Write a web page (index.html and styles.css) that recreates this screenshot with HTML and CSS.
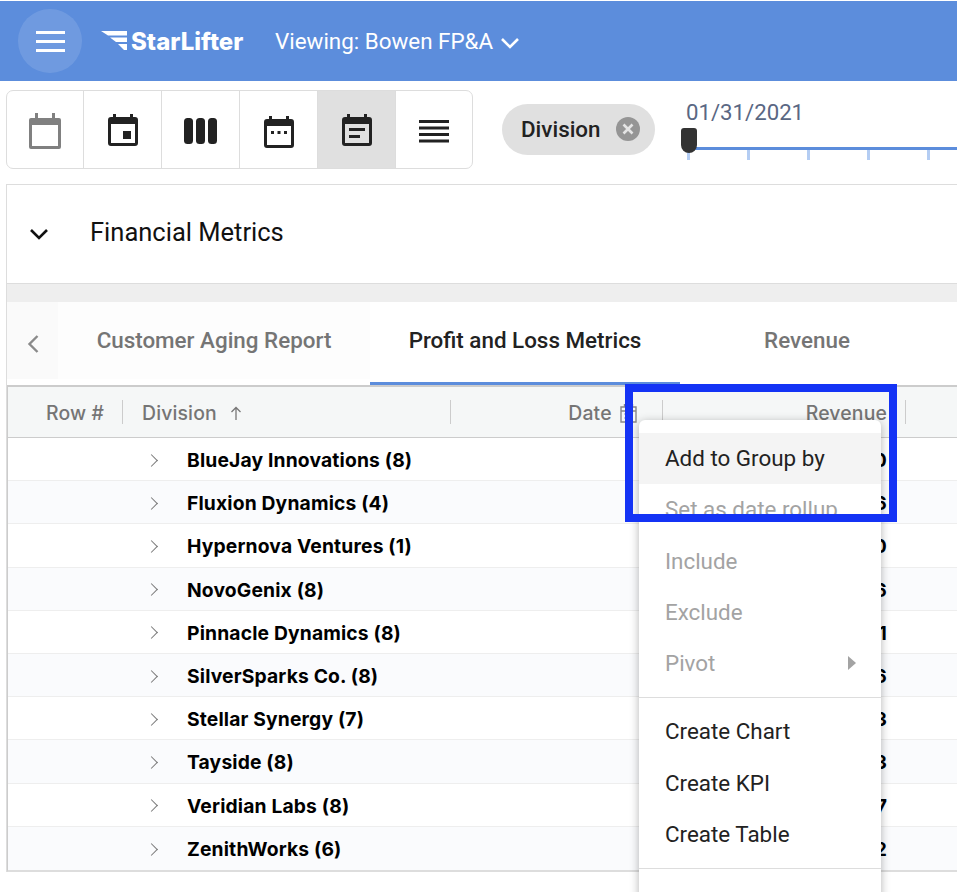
FILE: index.html
```html
<!DOCTYPE html>
<html lang="en">
<head>
    <meta charset="UTF-8">
    <meta name="viewport" content="width=device-width, initial-scale=1.0">
    <title>StarLifter - Financial Metrics</title>
    <link rel="stylesheet" href="styles.css">
</head>
<body>
    <header class="topbar">
        <button class="menu-btn"><span></span><span></span><span></span></button>
        <div class="logo">
            <svg class="logo-wing" width="30" height="20" viewBox="0 0 30 20">
                <polygon points="0,0 26,0 26,4.5 7,4.5" fill="#fff"/>
                <polygon points="9,6.5 26,6.5 26,11 15,11" fill="#fff"/>
                <polygon points="17,13 26,13 26,19 23,19" fill="#fff"/>
            </svg>
            <span class="logo-text">StarLifter</span>
        </div>
        <div class="viewing">Viewing: Bowen FP&amp;A</div>
        <svg class="viewing-caret" width="20" height="12" viewBox="0 0 20 12">
            <path d="M2 2 L10 10 L18 2" fill="none" stroke="#fff" stroke-width="2.6"/>
        </svg>
    </header>

    <section class="controls">
        <div class="view-switch">
            <div class="view-btn">
                <svg width="34" height="38" viewBox="0 0 34 38">
                    <path d="M7 1h3v5h14V1h3v5h4a2 2 0 0 1 2 2v27a2 2 0 0 1-2 2H3a2 2 0 0 1-2-2V8a2 2 0 0 1 2-2h4z M4 13v21h26V13z" fill="#808080" fill-rule="evenodd"/>
                </svg>
            </div>
            <div class="view-btn">
                <svg width="30" height="34" viewBox="0 0 30 34">
                    <path d="M5 1h3v3h14V1h3v3h2a3 3 0 0 1 3 3v23a3 3 0 0 1-3 3H3a3 3 0 0 1-3-3V7a3 3 0 0 1 3-3h2z M3 11v19h24V11z" fill="#222" fill-rule="evenodd"/>
                    <rect x="15" y="18" width="8" height="8" fill="#222"/>
                </svg>
            </div>
            <div class="view-btn">
                <svg width="34" height="26" viewBox="0 0 34 26">
                    <rect x="0" y="0" width="9" height="26" rx="3.5" fill="#222"/>
                    <rect x="12" y="0" width="9" height="26" rx="3.5" fill="#222"/>
                    <rect x="24" y="0" width="9" height="26" rx="3.5" fill="#222"/>
                </svg>
            </div>
            <div class="view-btn">
                <svg width="30" height="34" viewBox="0 0 30 34">
                    <path d="M5 1h3v3h14V1h3v3h2a3 3 0 0 1 3 3v23a3 3 0 0 1-3 3H3a3 3 0 0 1-3-3V7a3 3 0 0 1 3-3h2z M3 11v19h24V11z" fill="#222" fill-rule="evenodd"/>
                    <rect x="7" y="16" width="3" height="3" fill="#222"/>
                    <rect x="13.5" y="16" width="3" height="3" fill="#222"/>
                    <rect x="20" y="16" width="3" height="3" fill="#222"/>
                </svg>
            </div>
            <div class="view-btn is-active">
                <svg width="30" height="34" viewBox="0 0 30 34">
                    <path d="M5 1h3v3h14V1h3v3h2a3 3 0 0 1 3 3v23a3 3 0 0 1-3 3H3a3 3 0 0 1-3-3V7a3 3 0 0 1 3-3h2z M3 11v19h24V11z" fill="#222" fill-rule="evenodd"/>
                    <rect x="7" y="15" width="16" height="3" fill="#222"/>
                    <rect x="7" y="22" width="11" height="3" fill="#222"/>
                </svg>
            </div>
            <div class="view-btn">
                <svg width="30" height="24" viewBox="0 0 30 24">
                    <rect x="0" y="0" width="30" height="3" fill="#222"/>
                    <rect x="0" y="6.5" width="30" height="3" fill="#222"/>
                    <rect x="0" y="13" width="30" height="3" fill="#222"/>
                    <rect x="0" y="19.5" width="30" height="3" fill="#222"/>
                </svg>
            </div>
        </div>

        <div class="chip">
            <span>Division</span>
            <svg width="24" height="24" viewBox="0 0 24 24">
                <circle cx="12" cy="12" r="12" fill="#959595"/>
                <path d="M7.5 7.5 L16.5 16.5 M16.5 7.5 L7.5 16.5" stroke="#e4e4e4" stroke-width="2.6"/>
            </svg>
        </div>

        <div class="slider">
            <div class="slider-date">01/31/2021</div>
            <div class="slider-track">
                <span class="tick"></span><span class="tick"></span><span class="tick"></span><span class="tick"></span><span class="tick"></span>
                <span class="thumb"></span>
            </div>
        </div>
    </section>

    <section class="panel">
        <div class="panel-head">
            <svg width="20" height="12" viewBox="0 0 20 12">
                <path d="M2 2 L10 10 L18 2" fill="none" stroke="#111" stroke-width="2.6"/>
            </svg>
            <h2>Financial Metrics</h2>
        </div>
        <div class="band"></div>

        <div class="tabs">
            <div class="tab-back">
                <svg width="12" height="20" viewBox="0 0 12 20">
                    <path d="M10.5 2 L2.5 10 L10.5 18" fill="none" stroke="#8a8a8a" stroke-width="2.4"/>
                </svg>
            </div>
            <div class="tab tab-first">Customer Aging Report</div>
            <div class="tab is-active">Profit and Loss Metrics</div>
            <div class="tab tab-last">Revenue</div>
        </div>

        <div class="grid">
            <div class="grid-head">
                <div class="col-row">Row #</div>
                <div class="col-division">
                    Division
                    <svg width="12" height="14" viewBox="0 0 12 14">
                        <path d="M6 14 V2 M1.5 6 L6 1.5 L10.5 6" fill="none" stroke="#777" stroke-width="1.3"/>
                    </svg>
                </div>
                <div class="col-date">
                    Date
                    <svg width="17" height="20" viewBox="0 0 17 20">
                        <path d="M1 4h15v15H1z M1 8h15 M4.5 1v3 M12.5 1v3 M4.5 11h8 M4.5 15h8" fill="none" stroke="#888" stroke-width="1.4"/>
                    </svg>
                </div>
                <div class="col-revenue">Revenue</div>
            </div>

            <div class="grid-row"><span class="row-caret"></span><b>BlueJay Innovations (8)</b><span class="row-value">0</span></div>
            <div class="grid-row"><span class="row-caret"></span><b>Fluxion Dynamics (4)</b><span class="row-value">6</span></div>
            <div class="grid-row"><span class="row-caret"></span><b>Hypernova Ventures (1)</b><span class="row-value">0</span></div>
            <div class="grid-row"><span class="row-caret"></span><b>NovoGenix (8)</b><span class="row-value">6</span></div>
            <div class="grid-row"><span class="row-caret"></span><b>Pinnacle Dynamics (8)</b><span class="row-value">1</span></div>
            <div class="grid-row"><span class="row-caret"></span><b>SilverSparks Co. (8)</b><span class="row-value">6</span></div>
            <div class="grid-row"><span class="row-caret"></span><b>Stellar Synergy (7)</b><span class="row-value">3</span></div>
            <div class="grid-row"><span class="row-caret"></span><b>Tayside (8)</b><span class="row-value">3</span></div>
            <div class="grid-row"><span class="row-caret"></span><b>Veridian Labs (8)</b><span class="row-value">7</span></div>
            <div class="grid-row"><span class="row-caret"></span><b>ZenithWorks (6)</b><span class="row-value">2</span></div>
        </div>
    </section>

    <div class="context-menu">
        <div class="menu-item is-hover">Add to Group by</div>
        <div class="menu-item is-disabled">Set as date rollup</div>
        <div class="menu-item is-disabled">Include</div>
        <div class="menu-item is-disabled">Exclude</div>
        <div class="menu-item is-disabled">Pivot<span class="submenu-arrow"></span></div>
        <hr>
        <div class="menu-item">Create Chart</div>
        <div class="menu-item">Create KPI</div>
        <div class="menu-item">Create Table</div>
        <hr>
    </div>
    <div class="highlight-box"></div>
</body>
</html>
```

FILE: styles.css
```css
html, body {
    height: 892px;
    overflow: hidden;
}
body {
    margin: 0;
    position: relative;
    font-family: Roboto, "Liberation Sans", sans-serif;
    background-color: #fff;
    color: #222;
}

/* top bar */
.topbar {
    height: 80px;
    border-top: 1px solid #fff;
    background-color: #5c8ddc;
    display: flex;
    align-items: center;
    color: #fff;
}
.menu-btn {
    width: 64px;
    height: 64px;
    margin-left: 18px;
    padding: 0;
    border: none;
    border-radius: 50%;
    background-color: rgba(255, 255, 255, 0.12);
    display: flex;
    flex-direction: column;
    align-items: center;
    justify-content: center;
    gap: 6px;
}
.menu-btn span {
    display: block;
    width: 29px;
    height: 3px;
    background-color: #fff;
}
.logo {
    display: flex;
    align-items: center;
    margin-left: 19px;
    width: 174px;
}
.logo-text {
    font-family: Inter, sans-serif;
    font-weight: 800;
    font-size: 24px;
}
.viewing {
    font-size: 22.4px;
}
.viewing-caret {
    margin-left: 7px;
    margin-top: 4px;
}

/* controls row */
.controls {
    height: 103px;
    padding-left: 6px;
    display: flex;
    align-items: flex-start;
}
.view-switch {
    display: flex;
    height: 77px;
    margin-top: 9px;
    border: 1px solid #ddd;
    border-radius: 7px;
    overflow: hidden;
}
.view-btn {
    width: 78px;
    box-sizing: border-box;
    display: flex;
    align-items: center;
    justify-content: center;
    border-right: 1px solid #ddd;
}
.view-btn:first-child {
    width: 77px;
}
.view-btn:last-child {
    width: 76px;
    border-right: none;
}
.view-btn:nth-child(1) svg,
.view-btn:nth-child(3) svg {
    margin-top: 3px;
}
.view-btn:nth-child(4) svg,
.view-btn:nth-child(6) svg {
    margin-top: 4px;
}
.view-btn.is-active {
    background-color: #e0e0e0;
}
.chip {
    margin: 23px 0 0 29px;
    height: 51px;
    width: 153px;
    box-sizing: border-box;
    padding: 0 15px 2px 19px;
    border-radius: 26px;
    background-color: #e0e0e0;
    display: flex;
    align-items: center;
    justify-content: space-between;
    font-size: 22.4px;
    font-weight: 500;
}
.slider {
    flex: 1;
    margin: 18px 0 0 31px;
}
.slider-date {
    font-size: 22.2px;
    line-height: 26px;
    color: #5a6783;
}
.slider-track {
    position: relative;
    margin-top: 22px;
    margin-left: 1px;
    height: 3px;
    background-color: #5c8ddc;
    display: flex;
    gap: 57px;
}
.tick {
    width: 3px;
    height: 10px;
    margin-top: 3px;
    background-color: #b4cdf3;
}
.thumb {
    position: absolute;
    left: -6px;
    top: -19px;
    width: 16px;
    height: 25px;
    border-radius: 3px 3px 8px 8px;
    background-color: #333;
}

/* panel */
.panel {
    margin-left: 6px;
    border-left: 1px solid #ddd;
    border-top: 1px solid #ddd;
}
.panel-head {
    height: 99px;
    box-sizing: border-box;
    border-bottom: 1px solid #ddd;
    display: flex;
    align-items: center;
    padding-left: 22px;
}
.panel-head h2 {
    margin: 0 0 4px 41px;
    font-size: 25.5px;
    font-weight: 400;
    color: #111;
}
.band {
    height: 18px;
    background-color: #eee;
}

/* tabs */
.tabs {
    height: 84px;
    display: flex;
    font-size: 22.4px;
    font-weight: 500;
}
.tab-back {
    width: 51px;
    height: 77px;
    box-sizing: border-box;
    padding-top: 6px;
    background-color: #fafafa;
    display: flex;
    align-items: center;
    justify-content: center;
}
.tab {
    display: flex;
    align-items: center;
    justify-content: center;
    box-sizing: border-box;
    width: 312px;
    height: 77px;
    padding-bottom: 2px;
    color: #757575;
    background-color: #fdfdfd;
}
.tab.is-active {
    width: 310px;
    height: 83px;
    padding-bottom: 5px;
    color: #222;
    background-color: #fff;
    border-bottom: 3px solid #5c8ddc;
}
.tab-last {
    width: 254px;
    background-color: #fff;
}

/* grid */
.grid {
    border-top: 2px solid #ccc;
    border-left: 1px solid #ccc;
    margin-top: -1px;
    border-bottom: 2px solid #ddd;
    font-family: Inter, Roboto, sans-serif;
}
.grid-head {
    height: 50px;
    border-bottom: 1px solid #ccc;
    background-color: #f5f7f7;
    display: flex;
    align-items: center;
    font-size: 19.4px;
    letter-spacing: 0.15px;
    font-weight: 500;
    color: #757575;
}
.grid-head > div {
    height: 24px;
    line-height: 26px;
    border-right: 1px solid #ccc;
    box-sizing: border-box;
    white-space: nowrap;
}
.col-row {
    width: 115px;
    padding-left: 38px;
}
.col-division {
    width: 328px;
    padding-left: 19px;
}
.col-division svg {
    margin-left: 8px;
}
.col-date {
    width: 212px;
    text-align: right;
    padding-right: 25px;
}
.col-date svg {
    margin-left: 3px;
    vertical-align: -3px;
}
.col-revenue {
    width: 243px;
    text-align: right;
    padding-right: 18px;
}
.grid-row {
    height: 43.2px;
    box-sizing: border-box;
    padding-top: 2px;
    border-bottom: 1px solid #eee;
    display: flex;
    align-items: center;
    font-size: 19.3px;
    letter-spacing: 0.15px;
    color: #000;
}
.grid-row:nth-child(odd) {
    background-color: #fafbfd;
}
.grid-row:last-child {
    border-bottom: none;
}
.grid-row b {
    margin-left: 31px;
    font-weight: 700;
}
.row-caret {
    width: 8px;
    height: 8px;
    margin-left: 139px;
    border-top: 1.4px solid #777;
    border-right: 1.4px solid #777;
    transform: rotate(45deg);
}
.row-value {
    margin-left: auto;
    margin-right: 70px;
    font-weight: 700;
}

/* context menu */
.context-menu {
    position: absolute;
    left: 639px;
    top: 420px;
    width: 242px;
    padding-top: 13px;
    height: 490px;
    box-sizing: border-box;
    background-color: #fff;
    border-radius: 6px 6px 0 0;
    box-shadow: 0 2px 10px rgba(0, 0, 0, 0.3);
    font-size: 22.4px;
    color: #222;
}
.menu-item {
    height: 51.3px;
    line-height: 51.3px;
    padding-left: 26px;
    position: relative;
}
.menu-item.is-hover {
    background-color: #f4f4f4;
}
.menu-item.is-disabled {
    color: #a3a3a3;
}
.submenu-arrow {
    position: absolute;
    right: 25px;
    top: 18px;
    border-left: 8px solid #a3a3a3;
    border-top: 7.5px solid transparent;
    border-bottom: 7.5px solid transparent;
}
.context-menu hr {
    margin: 8px 0;
    border: none;
    border-top: 1px solid #ddd;
}
.highlight-box {
    position: absolute;
    left: 625px;
    top: 384px;
    width: 256px;
    height: 122px;
    border: 8px solid #1433f5;
}
```
